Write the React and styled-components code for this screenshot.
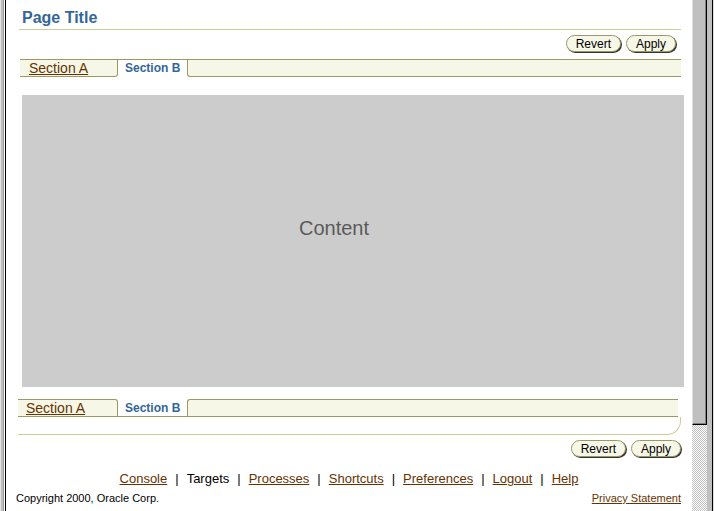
import React from "react";
import styled, { createGlobalStyle } from "styled-components";

const Global = createGlobalStyle`
  html, body { margin: 0; padding: 0; background: #fff; overflow: hidden; }
  body { font-family: "Liberation Sans", Arial, sans-serif; }
`;

const Frame = styled.div`
  display: flex;
  width: 714px;
  height: 511px;
  overflow: hidden;
  background: #fff;
`;

const LeftEdge = styled.div`
  flex: 0 0 6px;
  background: linear-gradient(to right, #e3e3e3 0 1px, #c0c0c0 1px 3px, #9a9a9a 3px 4px, #fff 4px 5px, #000 5px 6px);
`;

const Main = styled.main`
  flex: 0 0 686px;
  display: flex;
  flex-direction: column;
  padding-top: 9px;
  box-sizing: border-box;
  min-width: 0;
`;

const ScrollBar = styled.div`
  flex: 0 0 15px;
  display: flex;
  flex-direction: column;
`;

const Thumb = styled.div`
  height: 425px;
  box-sizing: border-box;
  background: #c0c0c0;
  border-left: 1px solid #dfdfdf;
  border-right: 1px solid #000;
  border-bottom: 1px solid #000;
  box-shadow: inset -1px -1px 0 #808080;
`;

const Track = styled.div`
  flex: 1;
  background: repeating-conic-gradient(#c0c0c0 0 25%, #fff 0 50%) 0 0 / 2px 2px;
`;

const RightEdge = styled.div`
  flex: 0 0 7px;
  background: linear-gradient(to right, #c0c0c0 0 5px, #000 5px 6px, #dfdfdf 6px 7px);
`;

const Title = styled.h1`
  margin: 0 11px 0 13px;
  padding: 0 0 2px 3px;
  border-bottom: 1px solid #cccc99;
  font-size: 16px;
  line-height: 18px;
  font-weight: bold;
  color: #336699;
`;

const ButtonRow = styled.div`
  display: flex;
  justify-content: flex-end;
  gap: 5px;
  margin: ${(p) => p.$top}px ${(p) => p.$right}px 0 0;
`;

const Button = styled.button`
  box-sizing: border-box;
  height: 17px;
  padding: 0 9px;
  border: 1px solid #999966;
  border-radius: 9px;
  background: #f7f7e7;
  box-shadow: 1px 1px 0 #333;
  font: 12px/16px "Liberation Sans", Arial, sans-serif;
  color: #000;
  cursor: pointer;
`;

const TabBar = styled.div`
  display: flex;
  height: 18px;
  margin: ${(p) => p.$top}px ${(p) => p.$right}px 0 ${(p) => p.$left}px;
`;

const line = "1px solid #999966";

const Tab = styled.div`
  box-sizing: border-box;
  flex: 0 0 ${(p) => p.$width}px;
  height: 18px;
  padding-left: ${(p) => p.$pad}px;
  display: flex;
  align-items: center;
  background: ${(p) => (p.$selected ? "#fff" : "#f7f7e7")};
  border-${(p) => (p.$open === "down" ? "top" : "bottom")}: ${line};
  border-${(p) => (p.$open === "down" ? "bottom" : "top")}: ${(p) =>
    p.$selected ? "1px solid transparent" : line};
  border-right: ${(p) => (p.$selected ? "none" : line)};
  border-${(p) => (p.$open === "down" ? "bottom" : "top")}-right-radius: 3px;
`;

const TabFiller = styled.div`
  box-sizing: border-box;
  flex: 1;
  height: 18px;
  background: #f7f7e7;
  border-top: ${line};
  border-bottom: ${line};
  border-left: ${line};
  border-${(p) => (p.$open === "down" ? "bottom" : "top")}-left-radius: 3px;
`;

const TabLink = styled.a`
  font-size: 14px;
  line-height: 16px;
  color: #663300;
  text-decoration: underline;
`;

const TabCurrent = styled.span`
  font-size: 12px;
  line-height: 16px;
  font-weight: bold;
  color: #336699;
`;

const Content = styled.div`
  box-sizing: border-box;
  margin: 18px 8px 0 16px;
  height: 292px;
  background: #cccccc;
  display: flex;
  align-items: center;
  justify-content: center;
  padding: 0 38px 26px 0;
  font-size: 20px;
  color: #5a5a5a;
`;

const Curve = styled.div`
  box-sizing: border-box;
  margin: 0 11px 0 12px;
  height: 18px;
  border-right: 1px solid #cccc99;
  border-bottom: 1px solid #cccc99;
  border-bottom-right-radius: 14px;
`;

const LinkRow = styled.nav`
  display: flex;
  justify-content: center;
  gap: 8px;
  margin-top: 14px;
  font-size: 13px;
  line-height: 16px;
  color: #000;
`;

const FooterLink = styled.a`
  color: #663300;
  text-decoration: underline;
`;

const Copyright = styled.div`
  display: flex;
  justify-content: space-between;
  margin-top: 5px;
  padding: 0 11px 0 10px;
  font-size: 11px;
  line-height: 13px;
  color: #000;
`;

const SmallLink = styled.a`
  color: #663300;
  text-decoration: underline;
`;

function Tabs({ top, left, right, firstWidth, firstPad, open }) {
  return (
    <TabBar $top={top} $left={left} $right={right}>
      <Tab $width={firstWidth} $pad={firstPad} $open={open}>
        <TabLink href="#">Section A</TabLink>
      </Tab>
      <Tab $width={69} $pad={7} $open={open} $selected>
        <TabCurrent>Section B</TabCurrent>
      </Tab>
      <TabFiller $open={open} />
    </TabBar>
  );
}

const links = ["Console", "Targets", "Processes", "Shortcuts", "Preferences", "Logout", "Help"];

export default function App() {
  return (
    <>
      <Global />
      <Frame>
        <LeftEdge />
        <Main>
          <Title>Page Title</Title>
          <ButtonRow $top={5} $right={16}>
            <Button>Revert</Button>
            <Button>Apply</Button>
          </ButtonRow>
          <Tabs top={7} left={14} right={11} firstWidth={98} firstPad={9} open="down" />
          <Content>Content</Content>
          <Tabs top={12} left={12} right={14} firstWidth={100} firstPad={8} open="up" />
          <Curve />
          <ButtonRow $top={5} $right={11}>
            <Button>Revert</Button>
            <Button>Apply</Button>
          </ButtonRow>
          <LinkRow>
            {links.map((l, i) => (
              <React.Fragment key={l}>
                {i > 0 && <span>|</span>}
                {l === "Targets" ? <span>{l}</span> : <FooterLink href="#">{l}</FooterLink>}
              </React.Fragment>
            ))}
          </LinkRow>
          <Copyright>
            <span>Copyright 2000, Oracle Corp.</span>
            <SmallLink href="#">Privacy Statement</SmallLink>
          </Copyright>
        </Main>
        <ScrollBar>
          <Thumb />
          <Track />
        </ScrollBar>
        <RightEdge />
      </Frame>
    </>
  );
}
